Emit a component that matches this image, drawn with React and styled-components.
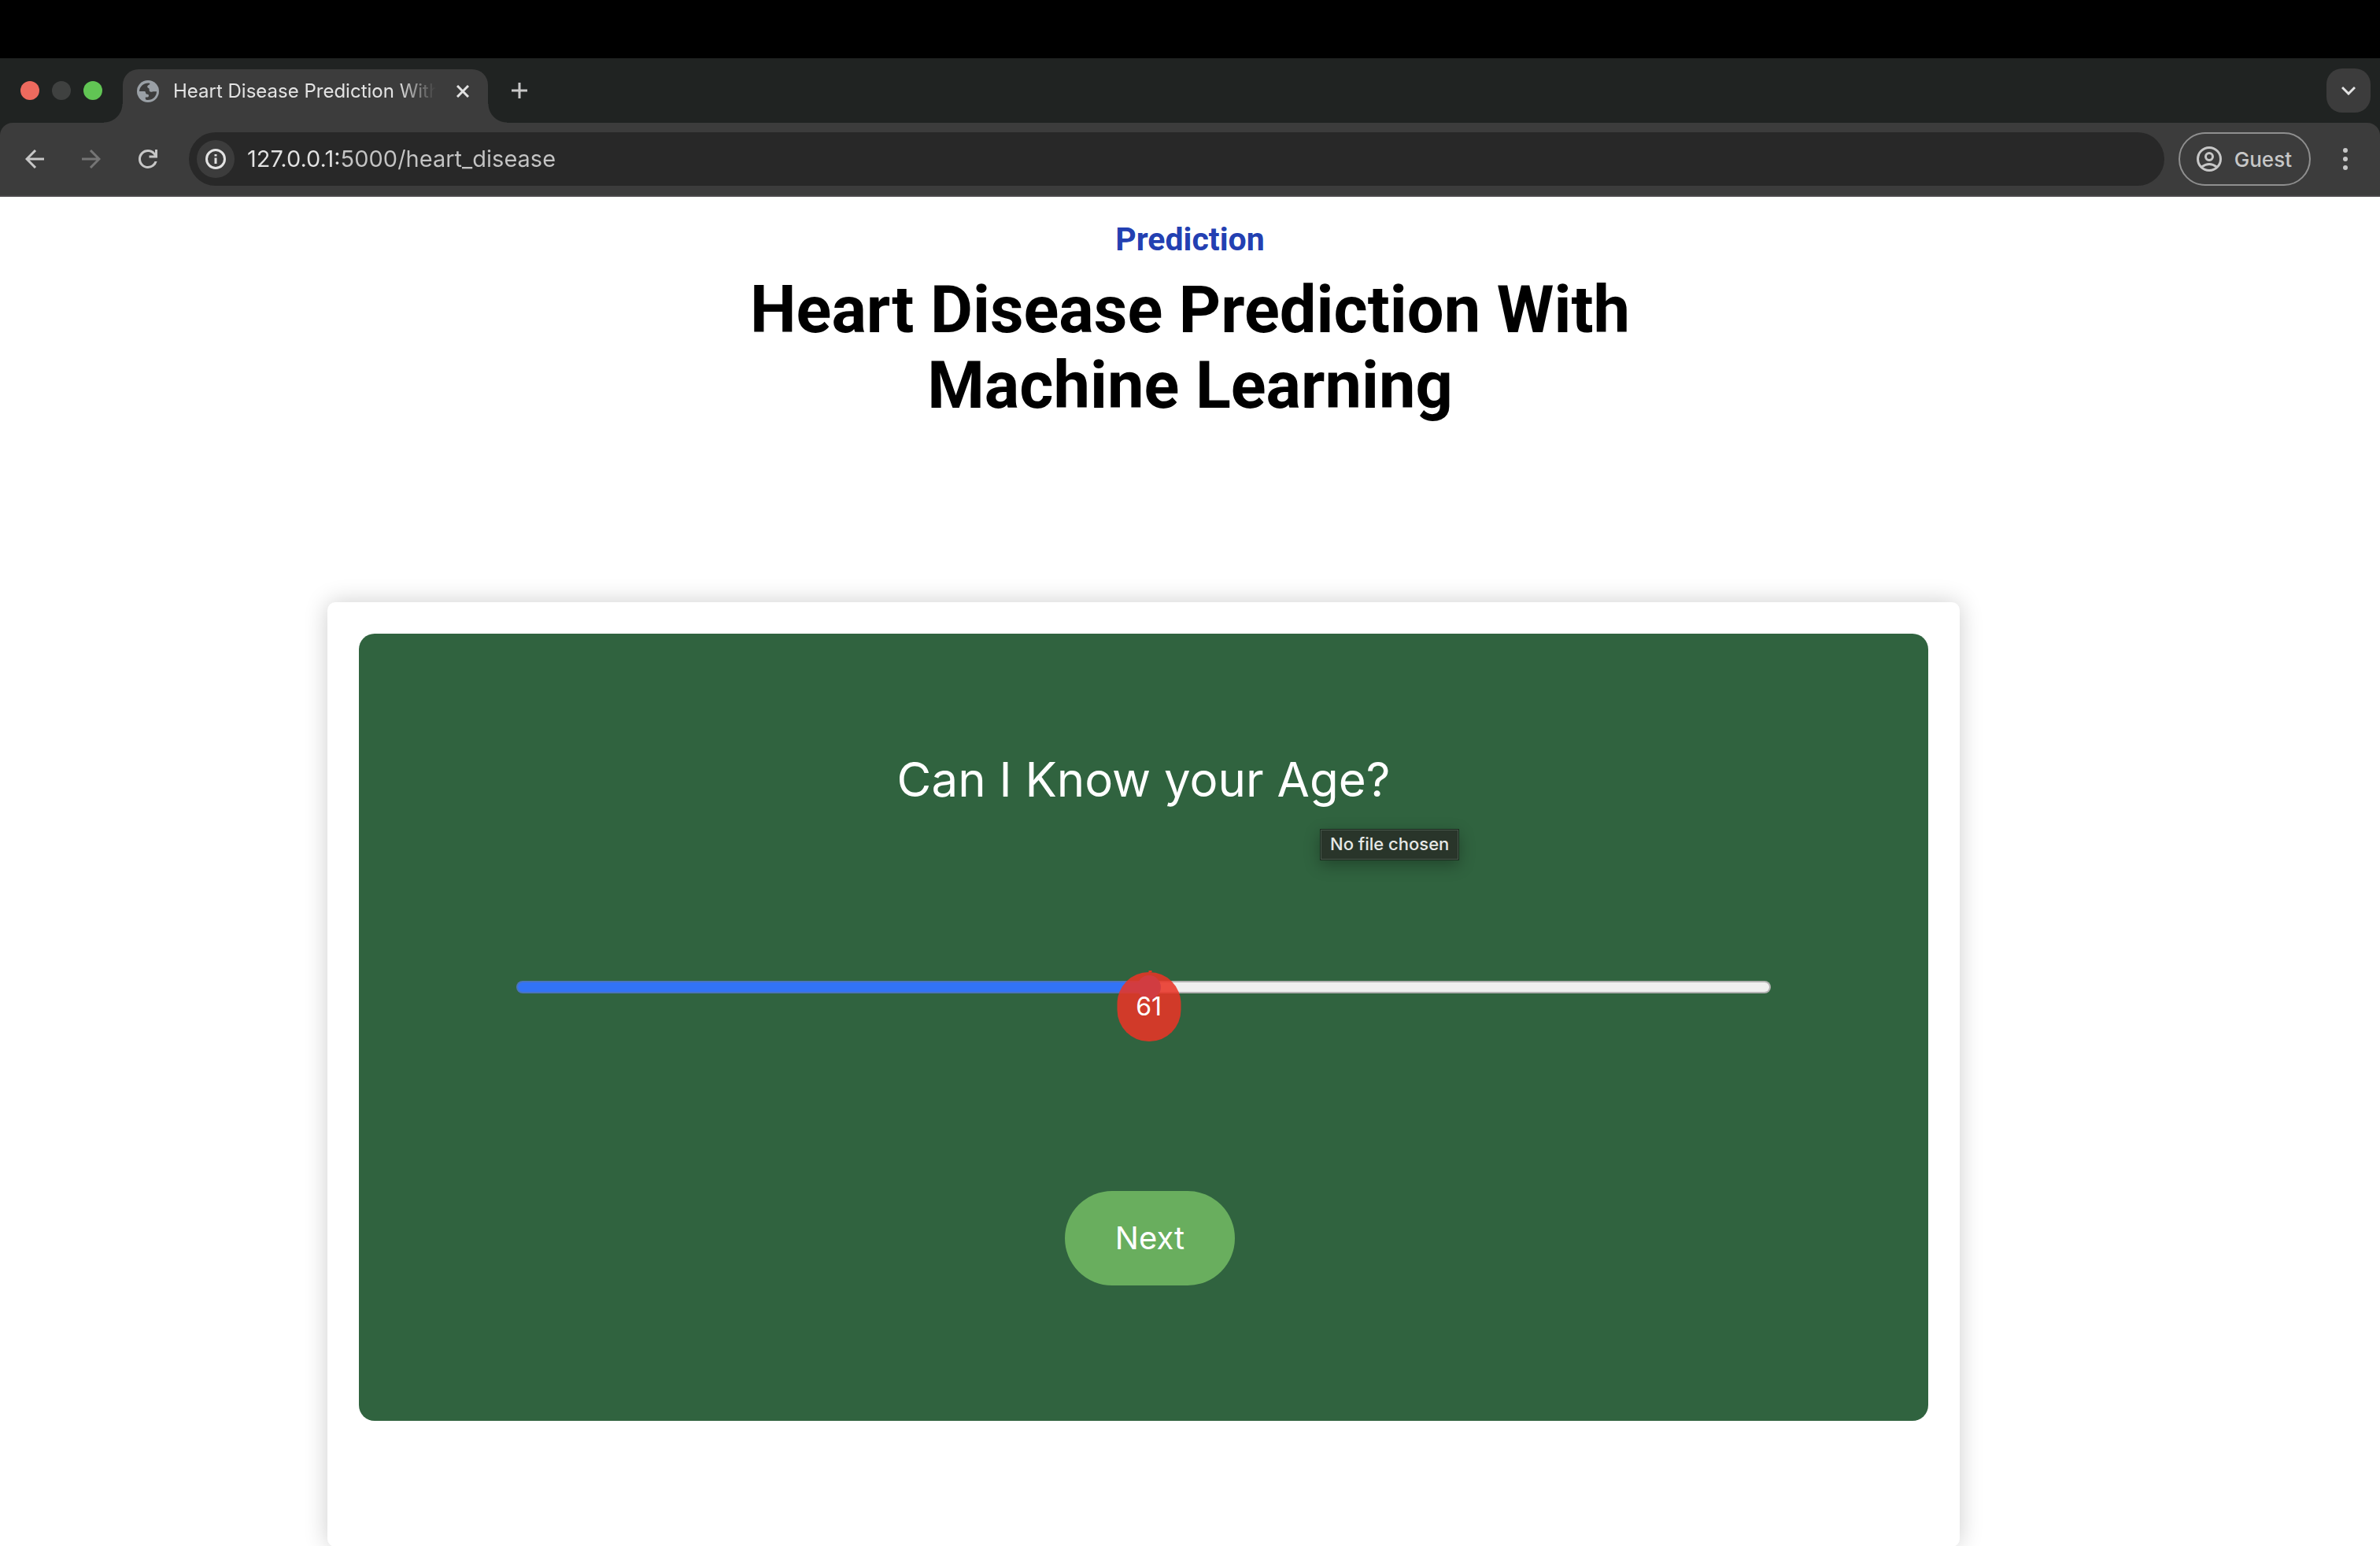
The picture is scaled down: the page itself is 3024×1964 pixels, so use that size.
import React, { useState } from "react";
import styled, { createGlobalStyle, css } from "styled-components";

const UI_FONT = `Inter, "Liberation Sans", sans-serif`;
const TITLE_FONT = `Roboto, "Open Sans", sans-serif`;

const color = {
  strip: "#202322",
  toolbar: "#3c3c3c",
  omnibox: "#282828",
  icon: "#c7c7c7",
  bright: "#e3e3e3",
  dim: "#757575",
  panel: "#30633f",
  blue: "#3273f6",
  red: "rgba(233, 52, 38, 0.87)",
};

const GlobalStyle = createGlobalStyle`
  *, *::before, *::after { box-sizing: border-box; }
  body { margin: 0; background: #fff; font-family: ${UI_FONT}; }
  button, input { font: inherit; }
`;

const Screen = styled.div`
  display: flex;
  flex-direction: column;
  height: 100vh;
  overflow: hidden;
`;

const MenuBar = styled.div`
  flex: none;
  height: 74px;
  background: #000;
`;

const TabStrip = styled.header`
  flex: none;
  display: flex;
  align-items: center;
  height: 82px;
  padding: 0 12px 0 26px;
  background: ${color.strip};
`;

const WindowControls = styled.div`
  display: flex;
  gap: 16px;
  margin-right: 26px;
`;

const WindowDot = styled.button`
  width: 24px;
  height: 24px;
  padding: 0;
  border: 0;
  border-radius: 50%;
  background: ${(p) => p.$tone};
`;

const flare = css`
  content: "";
  position: absolute;
  bottom: 0;
  width: 24px;
  height: 24px;
`;

const Tab = styled.div`
  position: relative;
  align-self: flex-end;
  display: flex;
  align-items: center;
  gap: 18px;
  width: 464px;
  height: 68px;
  padding: 0 16px 12px 18px;
  border-radius: 20px 20px 0 0;
  background: ${color.toolbar};

  &::before {
    ${flare}
    right: 100%;
    background: radial-gradient(circle at 0 0, transparent 23px, ${color.toolbar} 24px);
  }
  &::after {
    ${flare}
    left: 100%;
    background: radial-gradient(circle at 100% 0, transparent 23px, ${color.toolbar} 24px);
  }
`;

const TabTitle = styled.span`
  flex: 1;
  overflow: hidden;
  white-space: nowrap;
  font-size: 24px;
  line-height: 32px;
  color: ${color.bright};
  mask-image: linear-gradient(90deg, #000 calc(100% - 48px), transparent);
`;

const IconButton = styled.button`
  flex: none;
  display: flex;
  align-items: center;
  justify-content: center;
  width: ${(p) => p.$size || 56}px;
  height: ${(p) => p.$size || 56}px;
  padding: 0;
  border: 0;
  border-radius: 20px;
  background: ${(p) => (p.$filled ? color.toolbar : "transparent")};
  color: ${(p) => p.$tone || color.icon};
`;

const NewTabButton = styled(IconButton)`
  margin: 0 auto 0 12px;
`;

const ToolbarFrame = styled.div`
  flex: none;
  background: ${color.strip};
`;

const Toolbar = styled.nav`
  display: flex;
  align-items: center;
  gap: 16px;
  height: 94px;
  padding: 0 16px;
  border-bottom: 2px solid #4a474a;
  border-radius: 16px 16px 0 0;
  background: ${color.toolbar};
`;

const Omnibox = styled.div`
  flex: 1;
  display: flex;
  align-items: center;
  gap: 16px;
  height: 68px;
  margin-left: 8px;
  padding: 0 32px 0 10px;
  border-radius: 34px;
  background: ${color.omnibox};
`;

const SiteInfo = styled(IconButton)`
  border-radius: 50%;
`;

const Address = styled.input`
  flex: 1;
  min-width: 0;
  padding: 0;
  border: 0;
  outline: 0;
  font-size: 29px;
  line-height: 40px;
  color: transparent;
  background: linear-gradient(90deg, ${color.bright} 118px, #c4c4c4 118px);
  background-clip: text;
`;

const GuestButton = styled.button`
  display: flex;
  align-items: center;
  gap: 16px;
  height: 68px;
  margin-left: 2px;
  padding: 0 22px 0 21px;
  border: 2px solid #8f8f8f;
  border-radius: 34px;
  background: transparent;
  color: ${color.icon};
  font-size: 26px;
  font-weight: 500;
`;

const Page = styled.main`
  flex: 1;
  min-height: 0;
  overflow: hidden;
  padding-top: 24px;
  background: #fff;
`;

const Intro = styled.section`
  display: flex;
  flex-direction: column;
  align-items: center;
  gap: 12px;
  margin-bottom: 227px;
  font-family: ${TITLE_FONT};
  text-align: center;
`;

const Eyebrow = styled.p`
  margin: 0;
  font-size: 41px;
  font-weight: 700;
  line-height: 60px;
  color: #2340b2;
`;

const Title = styled.h1`
  max-width: 1200px;
  margin: 0;
  font-size: 83px;
  font-weight: 700;
  line-height: 96px;
  color: #000;
`;

const Card = styled.section`
  margin: 0 534px 0 416px;
  padding: 40px 40px 160px;
  border-radius: 10px;
  background: #fff;
  box-shadow: 0 0 30px rgba(0, 0, 0, 0.2);
`;

const Panel = styled.form`
  position: relative;
  display: flex;
  flex-direction: column;
  align-items: center;
  padding: 145px 0 172px;
  border-radius: 20px;
  background: ${color.panel};
  color: #fff;
  font-weight: 430;
`;

const Question = styled.label`
  margin-bottom: 209px;
  font-size: 60px;
  line-height: 80px;
`;

const Tooltip = styled.div`
  position: absolute;
  top: 248px;
  left: calc(50% + 224px);
  padding: 3px 11px 5px;
  border: 2px solid #47564a;
  outline: 1px solid #1b2c1f;
  outline-offset: -1px;
  background: #29352a;
  box-shadow: 0 6px 20px rgba(0, 0, 0, 0.3);
  font-size: 22px;
  font-weight: 500;
  line-height: 28px;
  color: #e6e8e6;
`;

const Slider = styled.div`
  position: relative;
  width: 80%;
  height: 30px;
  padding: 0 1px;
  margin-bottom: 244px;
`;

const Range = styled.input`
  display: block;
  appearance: none;
  width: 100%;
  height: 30px;
  margin: 0;
  background: transparent;

  &::-webkit-slider-runnable-track {
    height: 16px;
    border: 2px solid transparent;
    border-radius: 8px;
    background:
      linear-gradient(90deg, ${color.blue} calc(var(--ratio) * 100%), #efefef 0) padding-box,
      linear-gradient(90deg, #4a74be calc(var(--ratio) * 100%), #b2b2b2 0) border-box;
  }
  &::-webkit-slider-thumb {
    appearance: none;
    width: 30px;
    height: 30px;
    margin-top: -9px;
    border-radius: 50%;
    background: ${color.blue};
  }
`;

const Bubble = styled.output`
  position: absolute;
  top: -4px;
  left: calc(15px + (100% - 30px) * var(--ratio));
  width: 81px;
  height: 88px;
  border-radius: 40px;
  background: ${color.red};
  transform: translateX(-50%);
  text-align: center;
  font-size: 32px;
  line-height: 88px;
  pointer-events: none;

  &::before {
    content: "";
    position: absolute;
    bottom: 100%;
    left: 50%;
    width: 4px;
    height: 2px;
    background: #e8341f;
  }
`;

const NextButton = styled.button`
  width: 216px;
  height: 120px;
  margin-left: 16px;
  padding: 0 0 2px;
  border: 0;
  border-radius: 60px;
  background: #69ae5e;
  color: #fff;
  font-size: 40px;
`;

const Stroke = ({ w, h, sw = 3, children, ...rest }) => (
  <svg width={w} height={h} viewBox={`0 0 ${w} ${h}`} fill="none" stroke="currentColor" strokeWidth={sw} aria-hidden="true" {...rest}>
    {children}
  </svg>
);

const GlobeIcon = () => (
  <svg width="28" height="28" viewBox="0 0 28 28" aria-hidden="true">
    <circle cx="14" cy="14" r="14" fill="#9aa0a6" />
    <path
      d="M3 14C3.2 8 8.5 3.2 15 3.4C16.600 3.600 17 4.600 15.600 5.600C14.500 6.300 13.400 6.600 13.200 8C13 9.600 14.800 9.600 15.400 10.600C16 12 15 13.800 17 14.600C19 15.300 19.500 14.200 21.500 14.200H25C25 20.500 20 25.300 13 24.900C11 24.700 10.800 24.200 10.800 23V21.400H13.400C14.600 21.400 15 20.600 15 19.600C15 18.300 14.300 17.700 13 17.700C11.600 17.700 11.200 16.500 11 15.600C10.800 14.400 10.200 14 9 14Z"
      fill={color.toolbar}
    />
  </svg>
);

const ArrowIcon = ({ forward }) => (
  <Stroke w={24} h={24}>
    <path d={forward ? "M0 12H21M11 1L22 12L11 23" : "M24 12H3M13 1L2 12L13 23"} />
  </Stroke>
);

const ReloadIcon = () => (
  <svg width="36" height="36" viewBox="0 0 24 24" fill="currentColor" aria-hidden="true">
    <path d="M12 20c-2.233 0-4.125-.775-5.675-2.325C4.775 16.125 4 14.233 4 12s.775-4.125 2.325-5.675C7.875 4.775 9.767 4 12 4c1.15 0 2.25.238 3.3.712A7.83 7.83 0 0 1 18 6.75V4h2v7h-7V9h4.200a5.9 5.9 0 0 0-2.187-2.200A5.9 5.9 0 0 0 12 6c-1.667 0-3.083.583-4.250 1.750S6 10.333 6 12s.583 3.083 1.750 4.250S10.333 18 12 18c1.283 0 2.442-.367 3.475-1.100A5.8 5.8 0 0 0 17.650 14h2.100a7.7 7.7 0 0 1-2.925 4.350A7.77 7.77 0 0 1 12 20z" />
  </svg>
);

const InfoIcon = () => (
  <Stroke w={26} h={26}>
    <circle cx="13" cy="13" r="11.500" />
    <path d="M13 11.500V19M13 7V9.500" />
  </Stroke>
);

const GuestIcon = () => (
  <Stroke w={32} h={32}>
    <circle cx="16" cy="16" r="14.500" />
    <circle cx="16" cy="13" r="4.500" />
    <path d="M6.500 26Q16 19 25.500 26" />
  </Stroke>
);

const MoreIcon = () => (
  <svg width="6" height="28" viewBox="0 0 6 28" fill="currentColor" aria-hidden="true">
    <circle cx="3" cy="3" r="3" />
    <circle cx="3" cy="14" r="3" />
    <circle cx="3" cy="25" r="3" />
  </svg>
);

const MIN_AGE = 1;
const MAX_AGE = 120;

function AgeSlider() {
  const [age, setAge] = useState(61);
  const ratio = (age - MIN_AGE) / (MAX_AGE - MIN_AGE);
  return (
    <Slider style={{ "--ratio": ratio }}>
      <Range
        id="age"
        type="range"
        min={MIN_AGE}
        max={MAX_AGE}
        value={age}
        onChange={(e) => setAge(Number(e.target.value))}
      />
      <Bubble htmlFor="age">{age}</Bubble>
    </Slider>
  );
}

export default function App() {
  return (
    <Screen>
      <GlobalStyle />
      <MenuBar />
      <TabStrip>
        <WindowControls>
          <WindowDot $tone="#ed6a5e" aria-label="Close window" />
          <WindowDot $tone="#3f4140" aria-label="Minimize window" />
          <WindowDot $tone="#61c554" aria-label="Zoom window" />
        </WindowControls>
        <Tab>
          <GlobeIcon />
          <TabTitle>Heart Disease Prediction With</TabTitle>
          <IconButton $size={32} $tone={color.bright} aria-label="Close tab">
            <Stroke w={16} h={16}>
              <path d="M1 1L15 15M15 1L1 15" />
            </Stroke>
          </IconButton>
        </Tab>
        <NewTabButton aria-label="New tab">
          <Stroke w={20} h={20}>
            <path d="M10 0V20M0 10H20" />
          </Stroke>
        </NewTabButton>
        <IconButton $filled $tone={color.bright} aria-label="Search tabs">
          <Stroke w={18} h={12}>
            <path d="M1 2L9 10L17 2" />
          </Stroke>
        </IconButton>
      </TabStrip>
      <ToolbarFrame>
        <Toolbar>
          <IconButton aria-label="Back">
            <ArrowIcon />
          </IconButton>
          <IconButton $tone={color.dim} aria-label="Forward">
            <ArrowIcon forward />
          </IconButton>
          <IconButton aria-label="Reload">
            <ReloadIcon />
          </IconButton>
          <Omnibox>
            <SiteInfo $filled $size={48} $tone={color.bright} aria-label="Site information">
              <InfoIcon />
            </SiteInfo>
            <Address aria-label="Address" defaultValue="127.0.0.1:5000/heart_disease" />
          </Omnibox>
          <GuestButton>
            <GuestIcon />
            Guest
          </GuestButton>
          <IconButton aria-label="Menu">
            <MoreIcon />
          </IconButton>
        </Toolbar>
      </ToolbarFrame>
      <Page>
        <Intro>
          <Eyebrow>Prediction</Eyebrow>
          <Title>Heart Disease Prediction With Machine Learning</Title>
        </Intro>
        <Card>
          <Panel onSubmit={(e) => e.preventDefault()}>
            <Question htmlFor="age">Can I Know your Age?</Question>
            <Tooltip role="tooltip">No file chosen</Tooltip>
            <AgeSlider />
            <NextButton type="submit">Next</NextButton>
          </Panel>
        </Card>
      </Page>
    </Screen>
  );
}
